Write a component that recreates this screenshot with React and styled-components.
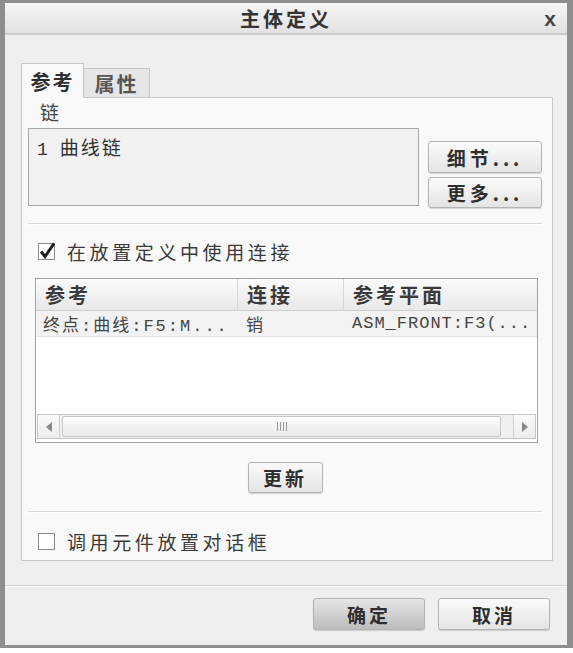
import styled, { createGlobalStyle } from "styled-components";

const GlobalStyle = createGlobalStyle`
  html, body {
    margin: 0;
    padding: 0;
    background: #ffffff;
  }
  body {
    font-family: "Noto Sans CJK SC", "Noto Sans", sans-serif;
    color: #333333;
  }
  * {
    box-sizing: border-box;
  }
`;

const Window = styled.div`
  width: 573px;
  height: 648px;
  display: flex;
  flex-direction: column;
  background: #efefef;
  border: 5px solid #8e8e8e;
  border-top-width: 3px;
  border-right-width: 6px;
  border-bottom-width: 3px;
`;

const TitleBar = styled.div`
  height: 32px;
  flex: none;
  display: flex;
  align-items: center;
  justify-content: center;
  position: relative;
  background: linear-gradient(#f6f6f6, #e2e2e2);
  border-bottom: 2px solid #cbcbcb;
`;

const Title = styled.div`
  font-size: 20px;
  font-weight: bold;
  letter-spacing: 3px;
  color: #333;
`;

const Close = styled.div`
  position: absolute;
  right: 11px;
  top: 1px;
  line-height: 30px;
  font-family: "Liberation Sans", Arial, sans-serif;
  font-weight: bold;
  font-size: 21px;
  color: #444;
`;

const Content = styled.div`
  padding: 28px 14px 0 16px;
  display: flex;
  flex-direction: column;
`;

const Tabs = styled.div`
  display: flex;
  align-items: flex-end;
  position: relative;
  z-index: 1;
  margin-bottom: -1px;
`;

const Tab = styled.div`
  height: ${(p) => (p.$active ? "35px" : "30px")};
  width: ${(p) => (p.$active ? "63px" : "66px")};
  display: flex;
  align-items: center;
  justify-content: center;
  font-size: 20px;
  font-weight: bold;
  letter-spacing: 2px;
  color: ${(p) => (p.$active ? "#2e2e2e" : "#555")};
  background: ${(p) => (p.$active ? "#f9f9f9" : "#e6e6e6")};
  border: 1px solid #c6c6c6;
  border-bottom: ${(p) => (p.$active ? "none" : "1px solid #c6c6c6")};
  border-left: ${(p) => (p.$active ? "1px solid #c6c6c6" : "none")};
`;

const Panel = styled.div`
  height: 464px;
  background: #f9f9f9;
  border: 1px solid #c8c8c8;
  padding: 2px 10px 0 6px;
  display: flex;
  flex-direction: column;
`;

const Label = styled.div`
  height: 24px;
  line-height: 24px;
  padding-left: 12px;
  font-size: 19px;
  color: #444;
`;

const ChainRow = styled.div`
  display: flex;
  margin-top: 4px;
`;

const ListBox = styled.div`
  width: 391px;
  height: 78px;
  background: #f2f2f2;
  border: 1px solid #a9a9a9;
  padding: 4px 8px;
  font-size: 19px;
  letter-spacing: 2px;
  color: #333;
`;

const Mono = styled.span`
  font-family: "Liberation Mono", "Noto Sans CJK SC", monospace;
  font-size: 18px;
  margin-right: 10px;
`;

const SideButtons = styled.div`
  display: flex;
  flex-direction: column;
  gap: 4px;
  margin: 13px 0 0 9px;
`;

const Button = styled.button`
  width: ${(p) => p.$w}px;
  height: ${(p) => p.$h}px;
  padding: 0;
  font-family: "Noto Sans CJK SC", sans-serif;
  font-size: 19px;
  font-weight: bold;
  letter-spacing: ${(p) => (p.$spaced ? "4px" : "3px")};
  color: #2e2e2e;
  border: 1px solid #b3b3b3;
  border-radius: 3px;
  background: ${(p) =>
    p.$primary
      ? "linear-gradient(#e6e6e6, #bdbdbd)"
      : "linear-gradient(#fbfbfb, #e4e4e4)"};
  box-shadow: 0 1px 1px rgba(0, 0, 0, 0.15);
  display: flex;
  align-items: center;
  justify-content: center;
`;

const Rule = styled.div`
  height: 2px;
  border-top: 1px solid #d8d8d8;
  border-bottom: 1px solid #ffffff;
  margin-top: ${(p) => p.$top}px;
`;

const CheckRow = styled.div`
  height: 28px;
  display: flex;
  align-items: center;
  gap: 12px;
  padding-left: 10px;
  margin-top: ${(p) => p.$top}px;
  font-size: 19px;
  letter-spacing: 3.6px;
  color: #3a3a3a;
`;

const Box = styled.svg`
  flex: none;
  overflow: visible;
`;

const Table = styled.div`
  height: 165px;
  margin: 13px 4px 0 7px;
  background: #ffffff;
  border: 1px solid #a2a2a2;
  display: flex;
  flex-direction: column;
`;

const HeaderRow = styled.div`
  height: 32px;
  display: flex;
  background: linear-gradient(#fbfbfb, #e8e8e8);
  border-bottom: 1px solid #cdcdcd;
`;

const HeadCell = styled.div`
  width: ${(p) => (p.$w ? `${p.$w}px` : "auto")};
  flex: ${(p) => (p.$w ? "none" : "1")};
  display: flex;
  align-items: center;
  padding-left: 9px;
  font-size: 20px;
  font-weight: bold;
  letter-spacing: 3px;
  color: #3a3a3a;
  border-right: ${(p) => (p.$last ? "none" : "1px solid #d6d6d6")};
`;

const DataRow = styled.div`
  height: 26px;
  display: flex;
  background: #f3f3f3;
  border-bottom: 1px solid #e4e4e4;
`;

const DataCell = styled.div`
  width: ${(p) => (p.$w ? `${p.$w}px` : "auto")};
  flex: ${(p) => (p.$w ? "none" : "1")};
  display: flex;
  align-items: center;
  padding-left: ${(p) => (p.$first ? "7px" : "8px")};
  white-space: nowrap;
  overflow: hidden;
  font-family: "Liberation Mono", "Noto Sans CJK SC", monospace;
  font-size: 17px;
  letter-spacing: ${(p) => (p.$first ? "2px" : "1px")};
  color: #444;
`;

const Filler = styled.div`
  flex: 1;
`;

const ScrollBar = styled.div`
  height: 25px;
  margin: 0 1px 3px 1px;
  display: flex;
  border: 1px solid #c6c6c6;
  background: #f0f0f0;
`;

const Arrow = styled.div`
  width: 22px;
  flex: none;
  display: flex;
  align-items: center;
  justify-content: center;
  background: linear-gradient(#fafafa, #ececec);
  border-left: ${(p) => (p.$right ? "1px solid #cfcfcf" : "none")};
  border-right: ${(p) => (p.$right ? "none" : "1px solid #cfcfcf")};
`;

const Track = styled.div`
  flex: 1;
  display: flex;
  padding: 1px 12px 1px 2px;
`;

const Thumb = styled.div`
  flex: 1;
  display: flex;
  align-items: center;
  justify-content: center;
  gap: 2px;
  border: 1px solid #c8c8c8;
  border-radius: 2px;
  background: linear-gradient(#fdfdfd, #e9e9e9);
`;

const Grip = styled.span`
  width: 1px;
  height: 9px;
  background: #9a9a9a;
`;

const Center = styled.div`
  display: flex;
  justify-content: center;
  margin-top: 19px;
`;

const FooterRule = styled.div`
  margin-top: 24px;
  height: 2px;
  border-top: 1px solid #d4d4d4;
  border-bottom: 1px solid #fafafa;
`;

const Footer = styled.div`
  display: flex;
  justify-content: flex-end;
  gap: 13px;
  padding: 11px 17px 0 0;
`;

const Checkbox = ({ checked }) => (
  <Box width="17" height="17" viewBox="0 0 17 17">
    <rect x="0.5" y="0.5" width="16" height="16" fill="#fff" stroke="#8a8a8a" />
    {checked && (
      <path
        d="M3 8.5 L7 13.5 L16 0.5"
        fill="none"
        stroke="#1e1e1e"
        strokeWidth="3"
        strokeLinejoin="miter"
      />
    )}
  </Box>
);

const Tri = ({ right }) => (
  <svg width="6" height="10" viewBox="0 0 6 10">
    <path d={right ? "M0 0 L6 5 L0 10 Z" : "M6 0 L0 5 L6 10 Z"} fill="#8a8a8a" />
  </svg>
);

export default function App() {
  return (
    <>
      <GlobalStyle />
      <Window>
        <TitleBar>
          <Title>主体定义</Title>
          <Close>x</Close>
        </TitleBar>
        <Content>
          <Tabs>
            <Tab $active>参考</Tab>
            <Tab>属性</Tab>
          </Tabs>
          <Panel>
            <Label>链</Label>
            <ChainRow>
              <ListBox>
                <Mono>1</Mono>曲线链
              </ListBox>
              <SideButtons>
                <Button $w={114} $h={32} $spaced>
                  细节...
                </Button>
                <Button $w={114} $h={31} $spaced>
                  更多...
                </Button>
              </SideButtons>
            </ChainRow>
            <Rule $top={15} />
            <CheckRow $top={12}>
              <Checkbox checked />
              在放置定义中使用连接
            </CheckRow>
            <Table>
              <HeaderRow>
                <HeadCell $w={202}>参考</HeadCell>
                <HeadCell $w={106}>连接</HeadCell>
                <HeadCell $last>参考平面</HeadCell>
              </HeaderRow>
              <DataRow>
                <DataCell $w={202} $first>
                  终点:曲线:F5:M...
                </DataCell>
                <DataCell $w={106}>销</DataCell>
                <DataCell>ASM_FRONT:F3(...</DataCell>
              </DataRow>
              <Filler />
              <ScrollBar>
                <Arrow>
                  <Tri />
                </Arrow>
                <Track>
                  <Thumb>
                    <Grip />
                    <Grip />
                    <Grip />
                    <Grip />
                  </Thumb>
                </Track>
                <Arrow $right>
                  <Tri right />
                </Arrow>
              </ScrollBar>
            </Table>
            <Center>
              <Button $w={75} $h={31}>
                更新
              </Button>
            </Center>
            <Rule $top={18} />
            <CheckRow $top={14}>
              <Checkbox />
              调用元件放置对话框
            </CheckRow>
          </Panel>
        </Content>
        <FooterRule />
        <Footer>
          <Button $w={112} $h={32} $primary>
            确定
          </Button>
          <Button $w={112} $h={32}>
            取消
          </Button>
        </Footer>
      </Window>
    </>
  );
}
